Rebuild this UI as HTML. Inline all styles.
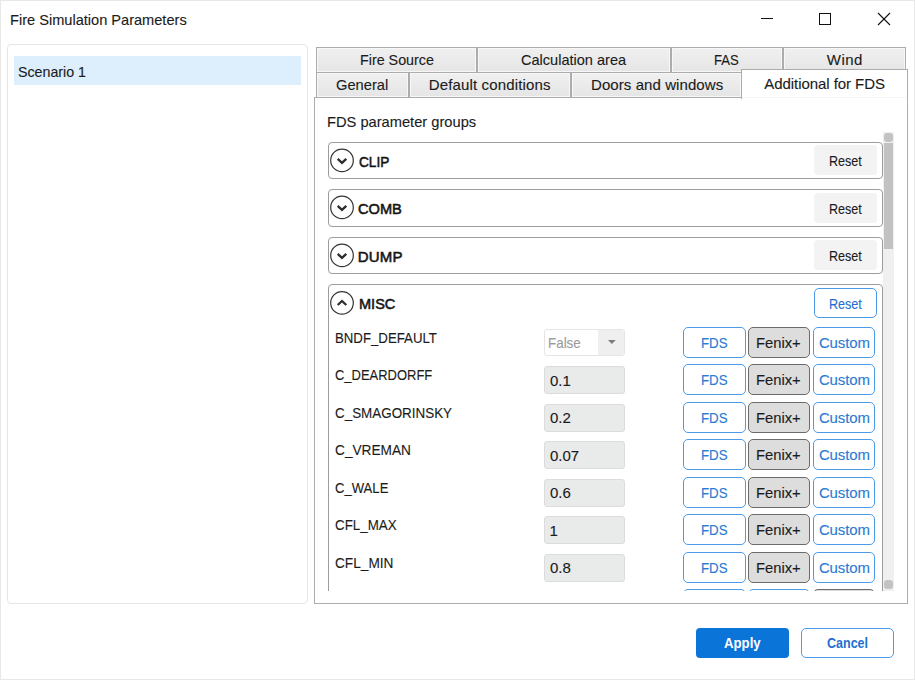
<!DOCTYPE html>
<html><head><meta charset="utf-8"><style>
html,body{margin:0;padding:0;width:915px;height:680px;overflow:hidden;background:#fff;}
.t{position:absolute;white-space:pre;line-height:1;font-family:"Liberation Sans", sans-serif;transform-origin:0 0;}
.b{position:absolute;box-sizing:border-box;}
svg.b{overflow:visible}
</style></head><body>
<div class="b" style="left:0px;top:0px;width:915px;height:680px;border:1px solid #e8e8e8;background:#fff;"></div>
<div class="t" style="left:9.63px;top:12.30px;font-size:15px;font-weight:400;color:#1b1b1b;letter-spacing:0.000px;transform:scaleX(0.9722);-webkit-text-stroke:0.12px #1b1b1b;">Fire Simulation Parameters</div>
<svg class="b" style="left:0;top:0" width="915" height="40">
<line x1="761" y1="18.5" x2="773" y2="18.5" stroke="#111" stroke-width="1"/>
<rect x="819.5" y="13.5" width="11" height="11" fill="none" stroke="#111" stroke-width="1"/>
<line x1="878" y1="13" x2="890" y2="25" stroke="#111" stroke-width="1.1"/>
<line x1="890" y1="13" x2="878" y2="25" stroke="#111" stroke-width="1.1"/>
</svg>
<div class="b" style="left:7px;top:44px;width:301px;height:560px;border:1px solid #e6e6e6;border-radius:4px;background:#fff;"></div>
<div class="b" style="left:14px;top:56px;width:287px;height:29px;background:#ddeffd;"></div>
<div class="t" style="left:18.24px;top:64.30px;font-size:15px;font-weight:400;color:#1b1b1b;letter-spacing:0.000px;transform:scaleX(0.9474);-webkit-text-stroke:0.12px #1b1b1b;">Scenario 1</div>
<div class="b" style="left:316px;top:47px;width:161px;height:26px;background:linear-gradient(#f0f0f0,#e5e5e5);border:1px solid #acacac;box-shadow:inset 0 0 0 1px #f7f7f7;"></div>
<div class="b" style="left:477px;top:47px;width:194px;height:26px;background:linear-gradient(#f0f0f0,#e5e5e5);border:1px solid #acacac;box-shadow:inset 0 0 0 1px #f7f7f7;"></div>
<div class="b" style="left:671px;top:47px;width:112px;height:26px;background:linear-gradient(#f0f0f0,#e5e5e5);border:1px solid #acacac;box-shadow:inset 0 0 0 1px #f7f7f7;"></div>
<div class="b" style="left:783px;top:47px;width:123px;height:26px;background:linear-gradient(#f0f0f0,#e5e5e5);border:1px solid #acacac;box-shadow:inset 0 0 0 1px #f7f7f7;"></div>
<div class="b" style="left:316px;top:72px;width:93px;height:26px;background:linear-gradient(#f0f0f0,#e5e5e5);border:1px solid #acacac;box-shadow:inset 0 0 0 1px #f7f7f7;"></div>
<div class="b" style="left:409px;top:72px;width:162px;height:26px;background:linear-gradient(#f0f0f0,#e5e5e5);border:1px solid #acacac;box-shadow:inset 0 0 0 1px #f7f7f7;"></div>
<div class="b" style="left:571px;top:72px;width:171px;height:26px;background:linear-gradient(#f0f0f0,#e5e5e5);border:1px solid #acacac;box-shadow:inset 0 0 0 1px #f7f7f7;"></div>
<div class="b" style="left:314px;top:97px;width:594px;height:507px;border:1px solid #acacac;background:#fff;"></div>
<div class="b" style="left:741px;top:69px;width:167px;height:30px;border:1px solid #acacac;border-bottom:none;background:#fff;"></div>
<div class="b" style="left:742px;top:97px;width:165px;height:1px;background:#f6f6f6;"></div>
<div class="t" style="left:359.76px;top:52.30px;font-size:15px;font-weight:400;color:#1b1b1b;letter-spacing:0.000px;transform:scaleX(0.9538);-webkit-text-stroke:0.12px #1b1b1b;">Fire Source</div>
<div class="t" style="left:521.42px;top:52.30px;font-size:15px;font-weight:400;color:#1b1b1b;letter-spacing:0.000px;transform:scaleX(0.9694);-webkit-text-stroke:0.12px #1b1b1b;">Calculation area</div>
<div class="t" style="left:714.25px;top:52.30px;font-size:15px;font-weight:400;color:#1b1b1b;letter-spacing:0.000px;transform:scaleX(0.8717);-webkit-text-stroke:0.12px #1b1b1b;">FAS</div>
<div class="t" style="left:826.80px;top:52.30px;font-size:15px;font-weight:400;color:#1b1b1b;letter-spacing:0.433px;-webkit-text-stroke:0.12px #1b1b1b;">Wind</div>
<div class="t" style="left:336.11px;top:77.30px;font-size:15px;font-weight:400;color:#1b1b1b;letter-spacing:0.000px;transform:scaleX(0.9787);-webkit-text-stroke:0.12px #1b1b1b;">General</div>
<div class="t" style="left:428.70px;top:77.30px;font-size:15px;font-weight:400;color:#1b1b1b;letter-spacing:0.153px;-webkit-text-stroke:0.12px #1b1b1b;">Default conditions</div>
<div class="t" style="left:591.00px;top:77.30px;font-size:15px;font-weight:400;color:#1b1b1b;letter-spacing:0.081px;-webkit-text-stroke:0.12px #1b1b1b;">Doors and windows</div>
<div class="t" style="left:764.30px;top:76.30px;font-size:15px;font-weight:400;color:#1b1b1b;letter-spacing:-0.065px;-webkit-text-stroke:0.12px #1b1b1b;">Additional for FDS</div>
<div class="t" style="left:327.13px;top:114.30px;font-size:15px;font-weight:400;color:#1b1b1b;letter-spacing:0.000px;transform:scaleX(0.9775);-webkit-text-stroke:0.12px #1b1b1b;">FDS parameter groups</div>
<div class="b" style="left:883px;top:132px;width:11px;height:459px;background:#f0f0f0;"></div>
<div class="b" style="left:884px;top:133px;width:9px;height:9px;background:#c3c3c3;border-radius:3px;"></div>
<div class="b" style="left:884px;top:143px;width:9px;height:106px;background:#c2c2c2;"></div>
<div class="b" style="left:884px;top:580px;width:9px;height:9px;background:#c3c3c3;border-radius:3px;"></div>
<div class="b" style="left:316px;top:132px;width:567px;height:459px;overflow:hidden">
<div class="b" style="left:12px;top:10px;width:555px;height:37px;border:1px solid #9d9d9d;border-radius:4px;background:#fff;"></div>
<svg class="b" style="left:13px;top:15px" width="26" height="26" viewBox="329 147 26 26"><circle cx="342" cy="160.4" r="11.3" fill="none" stroke="#333" stroke-width="1.2"/><path d="M337.7,158.8 L342,162.9 L346.3,158.8" fill="none" stroke="#2e2e2e" stroke-width="2.3"/></svg>
<div class="t" style="left:42.56px;top:22.30px;font-size:15px;font-weight:400;color:#141414;letter-spacing:0.000px;transform:scaleX(0.9091);-webkit-text-stroke:0.55px #141414;">CLIP</div>
<div class="b" style="left:498px;top:13px;width:63px;height:30px;background:#f3f3f3;border-radius:4px;"></div>
<div class="t" style="left:512.81px;top:22.15px;font-size:14px;font-weight:400;color:#1b1b1b;letter-spacing:0.000px;transform:scaleX(0.8955);-webkit-text-stroke:0.12px #1b1b1b;">Reset</div>
<div class="b" style="left:12px;top:57px;width:555px;height:38px;border:1px solid #9d9d9d;border-radius:4px;background:#fff;"></div>
<svg class="b" style="left:13px;top:62px" width="26" height="26" viewBox="329 194 26 26"><circle cx="342" cy="207.4" r="11.3" fill="none" stroke="#333" stroke-width="1.2"/><path d="M337.7,205.8 L342,209.9 L346.3,205.8" fill="none" stroke="#2e2e2e" stroke-width="2.3"/></svg>
<div class="t" style="left:42.22px;top:69.30px;font-size:15px;font-weight:400;color:#141414;letter-spacing:0.000px;transform:scaleX(0.9747);-webkit-text-stroke:0.55px #141414;">COMB</div>
<div class="b" style="left:498px;top:61px;width:63px;height:30px;background:#f3f3f3;border-radius:4px;"></div>
<div class="t" style="left:512.81px;top:70.15px;font-size:14px;font-weight:400;color:#1b1b1b;letter-spacing:0.000px;transform:scaleX(0.8955);-webkit-text-stroke:0.12px #1b1b1b;">Reset</div>
<div class="b" style="left:12px;top:105px;width:555px;height:37px;border:1px solid #9d9d9d;border-radius:4px;background:#fff;"></div>
<svg class="b" style="left:13px;top:110px" width="26" height="26" viewBox="329 242 26 26"><circle cx="342" cy="255.4" r="11.3" fill="none" stroke="#333" stroke-width="1.2"/><path d="M337.7,253.8 L342,257.9 L346.3,253.8" fill="none" stroke="#2e2e2e" stroke-width="2.3"/></svg>
<div class="t" style="left:41.70px;top:117.30px;font-size:15px;font-weight:400;color:#141414;letter-spacing:0.233px;-webkit-text-stroke:0.55px #141414;">DUMP</div>
<div class="b" style="left:498px;top:108px;width:63px;height:30px;background:#f3f3f3;border-radius:4px;"></div>
<div class="t" style="left:512.81px;top:117.15px;font-size:14px;font-weight:400;color:#1b1b1b;letter-spacing:0.000px;transform:scaleX(0.8955);-webkit-text-stroke:0.12px #1b1b1b;">Reset</div>
<div class="b" style="left:12px;top:152px;width:555px;height:700px;border:1px solid #9d9d9d;border-radius:4px;background:#fff;"></div>
<svg class="b" style="left:13px;top:157px" width="26" height="26" viewBox="329 289 26 26"><circle cx="342" cy="302.9" r="11.3" fill="none" stroke="#333" stroke-width="1.2"/><path d="M337.7,305.0 L342,301.0 L346.3,305.0" fill="none" stroke="#2e2e2e" stroke-width="2.3"/></svg>
<div class="t" style="left:42.64px;top:164.30px;font-size:15px;font-weight:400;color:#141414;letter-spacing:0.000px;transform:scaleX(0.9692);-webkit-text-stroke:0.55px #141414;">MISC</div>
<div class="b" style="left:498px;top:156px;width:63px;height:30px;border:1.3px solid #4a9ae6;border-radius:5px;background:#fff;"></div>
<div class="t" style="left:513.21px;top:165.15px;font-size:14px;font-weight:400;color:#1f6fd0;letter-spacing:0.000px;transform:scaleX(0.8983);-webkit-text-stroke:0.12px #1f6fd0;">Reset</div>
<div class="t" style="left:18.84px;top:198.30px;font-size:15px;font-weight:400;color:#1b1b1b;letter-spacing:0.000px;transform:scaleX(0.8817);-webkit-text-stroke:0.12px #1b1b1b;">BNDF_DEFAULT</div>
<div class="b" style="left:228px;top:197.2px;width:81px;height:26.5px;border:1px solid #e5e5e5;border-radius:3px;background:#fff;"></div>
<div class="b" style="left:282px;top:198px;width:26px;height:24.5px;background:#efefef;border-radius:0 2px 2px 0;"></div>
<svg class="b" style="left:292px;top:207.7px" width="8" height="5"><path d="M0,0 L7.7,0 L3.85,4.1z" fill="#7c7c7c"/></svg>
<div class="t" style="left:231.73px;top:203.30px;font-size:15px;font-weight:400;color:#9b9b9b;letter-spacing:0.000px;transform:scaleX(0.8937);-webkit-text-stroke:0.12px #9b9b9b;">False</div>
<div class="b" style="left:367px;top:195px;width:63px;height:31px;border:1.3px solid #4c9be8;border-radius:5px;background:#fff;"></div>
<div class="t" style="left:384.94px;top:203.30px;font-size:15px;font-weight:400;color:#2a7bd3;letter-spacing:0.000px;transform:scaleX(0.8861);-webkit-text-stroke:0.12px #2a7bd3;">FDS</div>
<div class="b" style="left:432px;top:195px;width:62px;height:31px;border:1px solid #6b6b6b;border-radius:5px;background:#dddddd;"></div>
<div class="t" style="left:440.32px;top:203.30px;font-size:15px;font-weight:400;color:#1b1b1b;letter-spacing:0.000px;transform:scaleX(0.9839);-webkit-text-stroke:0.12px #1b1b1b;">Fenix+</div>
<div class="b" style="left:497px;top:195px;width:62px;height:31px;border:1.3px solid #4c9be8;border-radius:5px;background:#fff;"></div>
<div class="t" style="left:502.90px;top:203.30px;font-size:15px;font-weight:400;color:#2a7bd3;letter-spacing:-0.120px;-webkit-text-stroke:0.12px #2a7bd3;">Custom</div>
<div class="t" style="left:19.30px;top:235.30px;font-size:15px;font-weight:400;color:#1b1b1b;letter-spacing:0.000px;transform:scaleX(0.8642);-webkit-text-stroke:0.12px #1b1b1b;">C_DEARDORFF</div>
<div class="b" style="left:228px;top:234px;width:81px;height:27.5px;border:1px solid #dcdcdc;border-radius:3px;background:#e9eaea;"></div>
<div class="t" style="left:234.00px;top:241.30px;font-size:15px;font-weight:400;color:#1b1b1b;letter-spacing:0.000px;-webkit-text-stroke:0.12px #1b1b1b;">0.1</div>
<div class="b" style="left:367px;top:232px;width:63px;height:31px;border:1.3px solid #4c9be8;border-radius:5px;background:#fff;"></div>
<div class="t" style="left:384.94px;top:240.30px;font-size:15px;font-weight:400;color:#2a7bd3;letter-spacing:0.000px;transform:scaleX(0.8861);-webkit-text-stroke:0.12px #2a7bd3;">FDS</div>
<div class="b" style="left:432px;top:232px;width:62px;height:31px;border:1px solid #6b6b6b;border-radius:5px;background:#dddddd;"></div>
<div class="t" style="left:440.32px;top:240.30px;font-size:15px;font-weight:400;color:#1b1b1b;letter-spacing:0.000px;transform:scaleX(0.9839);-webkit-text-stroke:0.12px #1b1b1b;">Fenix+</div>
<div class="b" style="left:497px;top:232px;width:62px;height:31px;border:1.3px solid #4c9be8;border-radius:5px;background:#fff;"></div>
<div class="t" style="left:502.90px;top:240.30px;font-size:15px;font-weight:400;color:#2a7bd3;letter-spacing:-0.120px;-webkit-text-stroke:0.12px #2a7bd3;">Custom</div>
<div class="t" style="left:19.27px;top:273.30px;font-size:15px;font-weight:400;color:#1b1b1b;letter-spacing:0.000px;transform:scaleX(0.8945);-webkit-text-stroke:0.12px #1b1b1b;">C_SMAGORINSKY</div>
<div class="b" style="left:228px;top:272px;width:81px;height:27.5px;border:1px solid #dcdcdc;border-radius:3px;background:#e9eaea;"></div>
<div class="t" style="left:234.00px;top:278.30px;font-size:15px;font-weight:400;color:#1b1b1b;letter-spacing:0.000px;-webkit-text-stroke:0.12px #1b1b1b;">0.2</div>
<div class="b" style="left:367px;top:270px;width:63px;height:31px;border:1.3px solid #4c9be8;border-radius:5px;background:#fff;"></div>
<div class="t" style="left:384.94px;top:278.30px;font-size:15px;font-weight:400;color:#2a7bd3;letter-spacing:0.000px;transform:scaleX(0.8861);-webkit-text-stroke:0.12px #2a7bd3;">FDS</div>
<div class="b" style="left:432px;top:270px;width:62px;height:31px;border:1px solid #6b6b6b;border-radius:5px;background:#dddddd;"></div>
<div class="t" style="left:440.32px;top:278.30px;font-size:15px;font-weight:400;color:#1b1b1b;letter-spacing:0.000px;transform:scaleX(0.9839);-webkit-text-stroke:0.12px #1b1b1b;">Fenix+</div>
<div class="b" style="left:497px;top:270px;width:62px;height:31px;border:1.3px solid #4c9be8;border-radius:5px;background:#fff;"></div>
<div class="t" style="left:502.90px;top:278.30px;font-size:15px;font-weight:400;color:#2a7bd3;letter-spacing:-0.120px;-webkit-text-stroke:0.12px #2a7bd3;">Custom</div>
<div class="t" style="left:19.26px;top:310.30px;font-size:15px;font-weight:400;color:#1b1b1b;letter-spacing:0.000px;transform:scaleX(0.9117);-webkit-text-stroke:0.12px #1b1b1b;">C_VREMAN</div>
<div class="b" style="left:228px;top:309px;width:81px;height:27.5px;border:1px solid #dcdcdc;border-radius:3px;background:#e9eaea;"></div>
<div class="t" style="left:234.00px;top:316.30px;font-size:15px;font-weight:400;color:#1b1b1b;letter-spacing:0.000px;-webkit-text-stroke:0.12px #1b1b1b;">0.07</div>
<div class="b" style="left:367px;top:307px;width:63px;height:31px;border:1.3px solid #4c9be8;border-radius:5px;background:#fff;"></div>
<div class="t" style="left:384.94px;top:315.30px;font-size:15px;font-weight:400;color:#2a7bd3;letter-spacing:0.000px;transform:scaleX(0.8861);-webkit-text-stroke:0.12px #2a7bd3;">FDS</div>
<div class="b" style="left:432px;top:307px;width:62px;height:31px;border:1px solid #6b6b6b;border-radius:5px;background:#dddddd;"></div>
<div class="t" style="left:440.32px;top:315.30px;font-size:15px;font-weight:400;color:#1b1b1b;letter-spacing:0.000px;transform:scaleX(0.9839);-webkit-text-stroke:0.12px #1b1b1b;">Fenix+</div>
<div class="b" style="left:497px;top:307px;width:62px;height:31px;border:1.3px solid #4c9be8;border-radius:5px;background:#fff;"></div>
<div class="t" style="left:502.90px;top:315.30px;font-size:15px;font-weight:400;color:#2a7bd3;letter-spacing:-0.120px;-webkit-text-stroke:0.12px #2a7bd3;">Custom</div>
<div class="t" style="left:19.29px;top:348.30px;font-size:15px;font-weight:400;color:#1b1b1b;letter-spacing:0.000px;transform:scaleX(0.8729);-webkit-text-stroke:0.12px #1b1b1b;">C_WALE</div>
<div class="b" style="left:228px;top:347px;width:81px;height:27.5px;border:1px solid #dcdcdc;border-radius:3px;background:#e9eaea;"></div>
<div class="t" style="left:234.00px;top:353.30px;font-size:15px;font-weight:400;color:#1b1b1b;letter-spacing:0.000px;-webkit-text-stroke:0.12px #1b1b1b;">0.6</div>
<div class="b" style="left:367px;top:345px;width:63px;height:31px;border:1.3px solid #4c9be8;border-radius:5px;background:#fff;"></div>
<div class="t" style="left:384.94px;top:353.30px;font-size:15px;font-weight:400;color:#2a7bd3;letter-spacing:0.000px;transform:scaleX(0.8861);-webkit-text-stroke:0.12px #2a7bd3;">FDS</div>
<div class="b" style="left:432px;top:345px;width:62px;height:31px;border:1px solid #6b6b6b;border-radius:5px;background:#dddddd;"></div>
<div class="t" style="left:440.32px;top:353.30px;font-size:15px;font-weight:400;color:#1b1b1b;letter-spacing:0.000px;transform:scaleX(0.9839);-webkit-text-stroke:0.12px #1b1b1b;">Fenix+</div>
<div class="b" style="left:497px;top:345px;width:62px;height:31px;border:1.3px solid #4c9be8;border-radius:5px;background:#fff;"></div>
<div class="t" style="left:502.90px;top:353.30px;font-size:15px;font-weight:400;color:#2a7bd3;letter-spacing:-0.120px;-webkit-text-stroke:0.12px #2a7bd3;">Custom</div>
<div class="t" style="left:19.28px;top:385.30px;font-size:15px;font-weight:400;color:#1b1b1b;letter-spacing:0.000px;transform:scaleX(0.8915);-webkit-text-stroke:0.12px #1b1b1b;">CFL_MAX</div>
<div class="b" style="left:228px;top:384px;width:81px;height:27.5px;border:1px solid #dcdcdc;border-radius:3px;background:#e9eaea;"></div>
<div class="t" style="left:233.50px;top:391.30px;font-size:15px;font-weight:400;color:#1b1b1b;letter-spacing:0.000px;-webkit-text-stroke:0.12px #1b1b1b;">1</div>
<div class="b" style="left:367px;top:382px;width:63px;height:31px;border:1.3px solid #4c9be8;border-radius:5px;background:#fff;"></div>
<div class="t" style="left:384.94px;top:390.30px;font-size:15px;font-weight:400;color:#2a7bd3;letter-spacing:0.000px;transform:scaleX(0.8861);-webkit-text-stroke:0.12px #2a7bd3;">FDS</div>
<div class="b" style="left:432px;top:382px;width:62px;height:31px;border:1px solid #6b6b6b;border-radius:5px;background:#dddddd;"></div>
<div class="t" style="left:440.32px;top:390.30px;font-size:15px;font-weight:400;color:#1b1b1b;letter-spacing:0.000px;transform:scaleX(0.9839);-webkit-text-stroke:0.12px #1b1b1b;">Fenix+</div>
<div class="b" style="left:497px;top:382px;width:62px;height:31px;border:1.3px solid #4c9be8;border-radius:5px;background:#fff;"></div>
<div class="t" style="left:502.90px;top:390.30px;font-size:15px;font-weight:400;color:#2a7bd3;letter-spacing:-0.120px;-webkit-text-stroke:0.12px #2a7bd3;">Custom</div>
<div class="t" style="left:19.26px;top:423.30px;font-size:15px;font-weight:400;color:#1b1b1b;letter-spacing:0.000px;transform:scaleX(0.9101);-webkit-text-stroke:0.12px #1b1b1b;">CFL_MIN</div>
<div class="b" style="left:228px;top:422px;width:81px;height:27.5px;border:1px solid #dcdcdc;border-radius:3px;background:#e9eaea;"></div>
<div class="t" style="left:234.00px;top:428.30px;font-size:15px;font-weight:400;color:#1b1b1b;letter-spacing:0.000px;-webkit-text-stroke:0.12px #1b1b1b;">0.8</div>
<div class="b" style="left:367px;top:420px;width:63px;height:31px;border:1.3px solid #4c9be8;border-radius:5px;background:#fff;"></div>
<div class="t" style="left:384.94px;top:428.30px;font-size:15px;font-weight:400;color:#2a7bd3;letter-spacing:0.000px;transform:scaleX(0.8861);-webkit-text-stroke:0.12px #2a7bd3;">FDS</div>
<div class="b" style="left:432px;top:420px;width:62px;height:31px;border:1px solid #6b6b6b;border-radius:5px;background:#dddddd;"></div>
<div class="t" style="left:440.32px;top:428.30px;font-size:15px;font-weight:400;color:#1b1b1b;letter-spacing:0.000px;transform:scaleX(0.9839);-webkit-text-stroke:0.12px #1b1b1b;">Fenix+</div>
<div class="b" style="left:497px;top:420px;width:62px;height:31px;border:1.3px solid #4c9be8;border-radius:5px;background:#fff;"></div>
<div class="t" style="left:502.90px;top:428.30px;font-size:15px;font-weight:400;color:#2a7bd3;letter-spacing:-0.120px;-webkit-text-stroke:0.12px #2a7bd3;">Custom</div>
<div class="t" style="left:19.28px;top:460.30px;font-size:15px;font-weight:400;color:#1b1b1b;letter-spacing:0.000px;transform:scaleX(0.8835);-webkit-text-stroke:0.12px #1b1b1b;">CFL_VELOCITY_NORM</div>
<div class="b" style="left:367px;top:457px;width:63px;height:31px;border:1.3px solid #4c9be8;border-radius:5px;background:#fff;"></div>
<div class="b" style="left:432px;top:457px;width:62px;height:31px;border:1.3px solid #4c9be8;border-radius:5px;background:#fff;"></div>
<div class="b" style="left:497px;top:457px;width:62px;height:31px;border:1px solid #6b6b6b;border-radius:5px;background:#dddddd;"></div>
</div>
<div class="b" style="left:696px;top:628px;width:93px;height:30px;background:#0b74d9;border-radius:4px;"></div>
<div class="t" style="left:724.22px;top:636.15px;font-size:14px;font-weight:700;color:#ffffff;letter-spacing:0.000px;transform:scaleX(0.9427);">Apply</div>
<div class="b" style="left:801px;top:628px;width:93px;height:30px;border:1.3px solid #4c9be8;border-radius:5px;background:#fff;"></div>
<div class="t" style="left:827.35px;top:636.15px;font-size:14px;font-weight:700;color:#1f6fd0;letter-spacing:0.000px;transform:scaleX(0.8941);">Cancel</div>
</body></html>
